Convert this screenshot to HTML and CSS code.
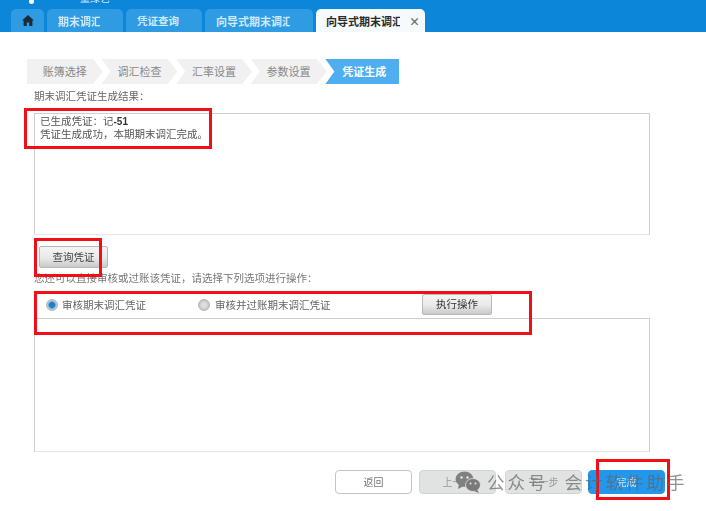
FILE: index.html
```html
<!DOCTYPE html>
<html lang="zh">
<head>
<meta charset="utf-8">
<title>期末调汇</title>
<link rel="stylesheet" href="styles.css">
</head>
<body>
<div class="page">
  <div class="soft">
    <header class="topbar">
      <div class="userline"><span class="dot"></span><span class="user">童绿艺</span></div>
      <nav class="tabs">
        <div class="tab home"><svg width="12" height="11" viewBox="0 0 12 11"><path d="M6 0 L12 5.5 L10.400 5.500 L10.400 11 L7.200 11 L7.200 7.500 L4.800 7.500 L4.800 11 L1.600 11 L1.600 5.500 L0 5.500 Z" fill="#1c2b36"/></svg></div>
        <div class="tab w76"><span class="clip">期末调汇</span></div>
        <div class="tab w76">凭证查询</div>
        <div class="tab w108"><span class="clip">向导式期末调汇</span></div>
        <div class="tab active"><span class="clip">向导式期末调汇</span><span class="close">×</span></div>
      </nav>
    </header>

    <main class="content">
      <div class="steps">
        <div class="step first">账簿选择</div>
        <div class="step">调汇检查</div>
        <div class="step">汇率设置</div>
        <div class="step">参数设置</div>
        <div class="step current">凭证生成</div>
      </div>
      <div class="caption">期末调汇凭证生成结果&#xFF1A;</div>
      <div class="box result">已生成凭证&#xFF1A;记<b class="num">-51</b><br>凭证生成成功&#xFF0C;本期期末调汇完成&#x3002;</div>
      <button class="btn query">查询凭证</button>
      <div class="hint">您还可以直接审核或过账该凭证&#xFF0C;请选择下列选项进行操作&#xFF1A;</div>
      <div class="options">
        <span class="radio on"></span><span class="opt first-opt">审核期末调汇凭证</span>
        <span class="radio"></span><span class="opt second-opt">审核并过账期末调汇凭证</span>
        <button class="btn exec">执行操作</button>
      </div>
      <div class="box log"></div>
      <div class="actions">
        <button class="act plain">返回</button>
        <button class="act off prev">上一步</button>
        <button class="act off next">下一步</button>
        <button class="act primary">完成</button>
      </div>
    </main>
  </div>

  <div class="mark m1"></div>
  <div class="mark m2"></div>
  <div class="mark m3"></div>
  <div class="mark m4"></div>

  <div class="watermark">
    <svg width="26" height="22" viewBox="0 0 26 22"><ellipse cx="9.500" cy="8" rx="9" ry="7.500" fill="#808080"/><path d="M4 13 L3 18 L9 15 Z" fill="#808080"/><ellipse cx="18" cy="14" rx="7.500" ry="6.500" fill="#7a7a7a" stroke="#e4e4e4" stroke-width="0.800"/><path d="M22 18.500 L24 22 L19 20 Z" fill="#7a7a7a"/><circle cx="6.500" cy="6.500" r="1.200" fill="#e8e8e8"/><circle cx="12.500" cy="6.500" r="1.200" fill="#e8e8e8"/><circle cx="15.500" cy="12.500" r="1" fill="#e8e8e8"/><circle cx="20.500" cy="12.500" r="1" fill="#e8e8e8"/></svg>
    <span class="wm-a">公众号</span><span class="wm-b">会计软件助手</span>
  </div>
</div>
</body>
</html>
```
FILE: styles.css
```css
* { box-sizing: border-box; }
html, body { margin: 0; padding: 0; background: #fff; }
body { font-family: "Noto Sans CJK SC", "Liberation Sans", sans-serif; font-size: 10px; color: #555; }
.page { position: relative; width: 706px; height: 511px; overflow: hidden; }
.soft { filter: blur(0.45px); }

.topbar { height: 32px; background: #0b86d9; display: flex; flex-direction: column; overflow: hidden; }
.userline { height: 9px; display: flex; align-items: flex-start; padding-left: 29px; position: relative; }
.dot { width: 5px; height: 5px; border-radius: 50%; background: #fff; margin-top: -1px; }
.user { margin-left: 46px; margin-top: -9px; font-size: 10px; line-height: 14px; color: #d5ecfb; }
.tabs { display: flex; gap: 3px; padding-left: 11px; height: 23px; }
.tab { height: 23px; padding-left: 11px; border-radius: 5px 5px 0 0; background: #2f9be3; color: #cfe9fb; font-size: 10.500px; font-weight: 700; display: flex; align-items: center; justify-content: flex-start; }
.home { width: 33px; padding-left: 11px; }
.w76 { width: 76px; }
.w108 { width: 108px; }
.clip { display: block; overflow: hidden; white-space: nowrap; font-size: 11px; }
.w76 .clip { width: 42px; }
.w108 .clip { width: 74px; }
.active { width: 109px; padding-left: 10px; background: #f5fafd; color: #2a2a2a; }
.active .clip { width: 74px; flex: none; }
.close { margin-left: 9px; font-size: 11px; line-height: 12px; color: #666; }

.content { padding: 27px 0 0 34px; }
.steps { display: flex; height: 25px; margin-left: -7px; width: 372px; }
.step { width: 76px; height: 25px; margin-right: -1px; background: #f1f1f1; color: #888; font-size: 11px; line-height: 25px; text-align: center; clip-path: polygon(0 0, 66px 0, 76px 50%, 66px 100%, 0 100%, 9px 50%); }
.step.first { clip-path: polygon(0 0, 66px 0, 76px 50%, 66px 100%, 0 100%); }
.step.current { background: #4eaef0; color: #fff; font-weight: 700; width: 74px; margin-right: 0; padding-left: 4px; clip-path: polygon(0 0, 100% 0, 100% 100%, 0 100%, 9px 50%); }

.caption { margin-top: 5px; height: 24px; font-size: 10.500px; line-height: 14px; color: #666; }
.box { width: 616px; background: #fff; border: 1px solid #cfcfcf; border-bottom-color: #e6e6e6; }
.result { height: 122px; padding: 1px 5px; font-size: 10.500px; line-height: 12px; color: #555; }
.num { font-family: "Liberation Sans", sans-serif; font-size: 10px; color: #333; }

.btn { display: block; padding: 0; border: 1px solid #b9b9b9; border-radius: 2px; background: linear-gradient(#f4f4f4, #e9e9e9 55%, #c9c9c9); color: #444; font: 10.500px/1 "Noto Sans CJK SC", sans-serif; }
.query { width: 69px; height: 22px; margin: 11px 0 0 5px; }
.hint { margin-top: 3px; height: 14px; font-size: 10.500px; line-height: 14px; color: #777; white-space: nowrap; }
.options { display: flex; align-items: center; height: 23px; margin-top: 8px; padding-left: 12px; position: relative; }
.radio { width: 12px; height: 12px; border-radius: 50%; border: 1px solid #b5b5b5; background: radial-gradient(circle, #ddd 30%, #c4c4c4 70%, #f1f1f1); flex: none; }
.radio.on { background: radial-gradient(circle, #1f7fc4 35%, #a9c9de 60%, #e3e3e3); }
.opt { font-size: 10.500px; color: #666; margin-left: 4px; white-space: nowrap; }
.first-opt { width: 136px; }
.second-opt { width: 207px; margin-left: 5px; }
.exec { width: 70px; height: 21px; color: #333; }
.log { height: 134px; margin-top: 2px; }

.actions { display: flex; margin: 18px 0 0 301px; }
.act { width: 77px; height: 24px; padding: 0; border-radius: 4px; font: 10px/1 "Noto Sans CJK SC", sans-serif; }
.plain { background: #fff; border: 1px solid #c4c4c4; color: #777; }
.off { background: #e1e3e3; border: 1px solid #d2d4d4; color: #999; }
.prev { margin-left: 7px; }
.next { margin-left: 9px; }
.primary { margin-left: 6px; background: #2297ec; border: 1px solid #2297ec; color: #cfe9fb; }

.mark { position: absolute; border: 3px solid #f00f16; }
.m1 { left: 24px; top: 108px; width: 188px; height: 41px; }
.m2 { left: 34px; top: 238px; width: 68px; height: 39px; }
.m3 { left: 34px; top: 291px; width: 498px; height: 44px; }
.m4 { left: 596px; top: 459px; width: 74px; height: 41px; }

.watermark { position: absolute; left: 455px; top: 468px; display: flex; align-items: center; height: 28px; color: rgba(100, 100, 100, 0.7); font-size: 17.500px; line-height: 28px; white-space: nowrap; letter-spacing: 3px; }
.wm-a { margin-left: 6px; }
.wm-b { margin-left: 16px; }
```
